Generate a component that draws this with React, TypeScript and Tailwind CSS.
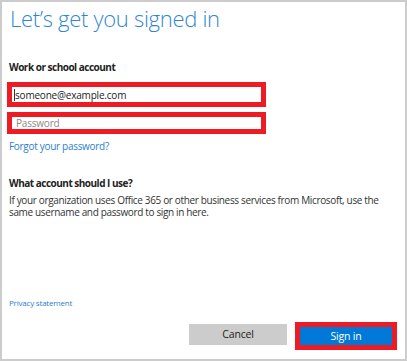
import React from 'react';

export default function App() {
  return (
    <div className="w-[407px] h-[361px] bg-white border-2 border-[#cccccc] flex flex-col pl-[5px] pr-[8px] pb-[9px] font-['Open_Sans',sans-serif] text-[#222222]">
      {/* Header */}
      <h1 className="pl-[3px] mt-[2px] text-[22px] leading-[28px] font-light text-[#2f86d3] tracking-[-0.3px]">
        Let’s get you signed in
      </h1>

      {/* Account fields */}
      <p className="pl-[2px] mt-[28px] text-[10px] leading-[14px] font-bold tracking-[-0.5px]">Work or school account</p>
      <div className="mt-[8px] w-[259px] h-[25px] border-[5px] border-[#ed1c24] flex items-center pl-[2px]">
        <span className="w-px h-[12px] bg-[#333333]" />
        <span className="text-[10px] leading-[12px] tracking-[-0.2px] text-[#222222]">someone@example.com</span>
      </div>
      <div className="mt-[5px] w-[259px] h-[22px] border-[5px] border-[#ed1c24] flex items-center pl-[4px]">
        <span className="text-[10px] leading-[12px] tracking-[-0.2px] text-[#8a8a8a]">Password</span>
      </div>
      <a className="pl-[2px] mt-[5px] text-[10px] leading-[14px] tracking-[-0.3px] text-[#2a7fcf]">Forgot your password?</a>

      {/* Help */}
      <p className="pl-[2px] mt-[23px] text-[10px] leading-[14px] font-bold tracking-[-0.5px]">What account should I use?</p>
      <p className="pl-[2px] mt-[5px] text-[10px] leading-[11.5px] text-[#333333] tracking-[-0.35px]">
        If your organization uses Office 365 or other business services from Microsoft, use the same username and password to sign in here.
      </p>

      <a className="pl-[2px] mt-auto text-[8px] leading-[12px] tracking-[-0.2px] text-[#2a7fcf]">Privacy statement</a>

      {/* Actions */}
      <div className="mt-[13px] flex justify-end items-end gap-[8px]">
        <button className="mb-[5px] w-[98px] h-[21px] bg-[#cccccc] text-[10.5px] leading-none tracking-[-0.2px] text-[#222222]">Cancel</button>
        <button className="w-[102px] h-[28px] border-[5px] border-[#ed1c24] bg-[#0078d7] text-[10.5px] leading-none tracking-[-0.2px] text-white">
          Sign in
        </button>
      </div>
    </div>
  );
}
